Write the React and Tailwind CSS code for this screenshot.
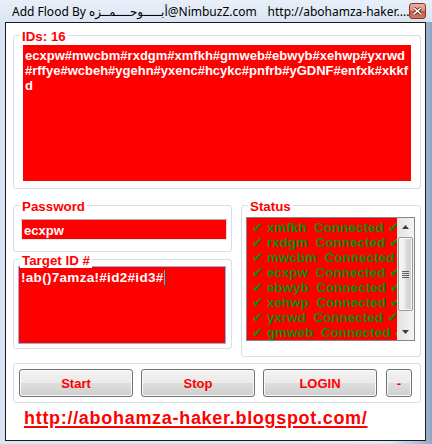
export default function App() {
  const rows = [
    "xmfkh",
    "rxdgm",
    "mwcbm",
    "ecxpw",
    "ebwyb",
    "xehwp",
    "yxrwd",
    "gmweb",
  ];
  const btn =
    "h-[28px] rounded-[3px] border border-[#707070] bg-[linear-gradient(#f2f2f2_0%,#ebebeb_50%,#dddddd_50%,#cfcfcf_100%)] shadow-[inset_0_0_0_1px_#fbfbfb] text-[#ff0000] font-bold text-[13px] pt-[2px] flex items-center justify-center";
  const label =
    "absolute top-[-7px] left-[6px] px-[2px] bg-white text-[#ff0000] font-bold text-[13.33px] leading-[15px] whitespace-nowrap";
  const group = "relative border border-[#d5dfe5] rounded-[3px]";
  return (
    <div className="w-[432px] h-[444px] overflow-hidden bg-[linear-gradient(90deg,#d9e5f3_0%,#dfe9f5_90%,#aebfd6_97%,#8fa6c4_100%)] flex flex-col font-['Liberation_Sans','DejaVu_Sans',sans-serif]">
      {/* title bar */}
      <div className="h-[22px] shrink-0 flex items-center pl-[12px] pt-[2px] text-[12px] leading-[18px] text-black font-['Noto_Sans','DejaVu_Sans',sans-serif] bg-[linear-gradient(#e8eff9,#dae5f2)]">
        <span className="w-[263px] whitespace-nowrap overflow-hidden">
          Add Flood By أبـــــوحــــمــزه@NimbuzZ.com
        </span>
        <span className="whitespace-nowrap">http://abohamza-haker....</span>
        <div className="ml-auto mr-[6px] mb-[2px] w-[17px] h-[16px] rounded-[3px] border border-[#7d3a2c] bg-[linear-gradient(#eab1a2_0%,#de8c76_50%,#c9583f_50%,#d4775e_100%)] flex items-center justify-center">
          <svg width="9" height="8" viewBox="0 0 9 8">
            <path
              d="M1 1 L8 7 M8 1 L1 7"
              stroke="#4a1a10"
              strokeWidth="3"
              strokeLinecap="square"
            />
            <path
              d="M1 1 L8 7 M8 1 L1 7"
              stroke="#ffffff"
              strokeWidth="1.6"
              strokeLinecap="square"
            />
          </svg>
        </div>
      </div>

      {/* client area */}
      <div className="ml-[5px] w-[421px] h-[419px] shrink-0 border border-[#1c1c1c] bg-white pl-[7px] pt-[12px]">
        {/* IDs */}
        <div className={`${group} w-[408px] h-[154px] pt-[9px] pl-[9px]`}>
          <span className={label}>IDs: 16</span>
          <div className="w-[388px] h-[136px] bg-[#ff0000] pl-[2px] pt-[3px] text-white font-bold text-[13px] leading-[15px] overflow-hidden whitespace-nowrap">
            <div>ecxpw#mwcbm#rxdgm#xmfkh#gmweb#ebwyb#xehwp#yxrwd</div>
            <div>#rffye#wcbeh#ygehn#yxenc#hcykc#pnfrb#yGDNF#enfxk#xkkf</div>
            <div>d</div>
          </div>
        </div>

        {/* middle row */}
        <div className="mt-[16px] flex items-start gap-[9px]">
          <div className="w-[219px] flex flex-col gap-[7px]">
            <div className={`${group} h-[47px] pl-[7px] pt-[13px]`}>
              <span className={label}>Password</span>
              <div className="w-[206px] h-[21px] border border-[#abadb3] border-l-[#e2e3ea] border-r-[#dbdfe6] border-b-[#e3e9ef]">
                <div className="h-full bg-[#ff0000] pl-[2px] text-white font-bold text-[13px] leading-[21px] overflow-hidden">
                  ecxpw
                </div>
              </div>
            </div>
            <div className={`${group} h-[90px] pl-[4px] pt-[6px]`}>
              <span className={label}>Target ID #</span>
              <div className="w-[208px] h-[78px] border border-[#8db2dc]">
                <div className="h-full bg-[#ff0000] pl-[2px] pt-[3px] text-white font-bold text-[13.5px] tracking-[0.3px] leading-[15px] whitespace-nowrap">
                  !ab()7amza!#id2#id3#
                  <span className="inline-block w-[1px] h-[15px] bg-[#00e5ff] align-[-3px]" />
                </div>
              </div>
            </div>
          </div>

          <div className={`${group} w-[180px] h-[152px] pl-[4px] pt-[11px]`}>
            <span className={label}>Status</span>
            <div className="w-[169px] h-[124px] border border-[#828790] flex">
              <div className="w-[150px] h-full bg-[#ff0000] pl-[5px] pt-[2px] overflow-hidden text-[#0a8a0a] font-bold text-[13.5px] leading-[15px]">
                {rows.map((r) => (
                  <div key={r} className="h-[15px] whitespace-pre">
                    {"✔ " + r + "  Connected ✔"}
                  </div>
                ))}
              </div>
              <div className="w-[17px] h-full bg-[linear-gradient(90deg,#e3e3e3,#f3f3f3)] flex flex-col items-center">
                <div className="h-[17px] w-full flex items-center justify-center">
                  <svg width="7" height="4" viewBox="0 0 7 4">
                    <path d="M0 4 L3.5 0 L7 4 Z" fill="#3c3c3c" />
                  </svg>
                </div>
                <div className="mt-[2px] w-[15px] h-[74px] rounded-[2px] border border-[#989898] bg-[linear-gradient(90deg,#f6f6f6_0%,#ececec_45%,#dadada_55%,#d0d0d0_100%)] shadow-[inset_0_0_0_1px_#fafafa] flex items-center justify-center">
                  <svg width="7" height="7" viewBox="0 0 7 7">
                    <path
                      d="M0 0.5 H7 M0 2.5 H7 M0 4.5 H7 M0 6.5 H7"
                      stroke="#5f5f5f"
                      strokeWidth="1"
                    />
                  </svg>
                </div>
                <div className="mt-auto h-[17px] w-full flex items-center justify-center">
                  <svg width="7" height="4" viewBox="0 0 7 4">
                    <path d="M0 0 L7 0 L3.5 4 Z" fill="#3c3c3c" />
                  </svg>
                </div>
              </div>
            </div>
          </div>
        </div>

        {/* buttons */}
        <div className={`${group} mt-[6px] w-[408px] h-[40px] pl-[5px] pt-[5px] flex`}>
          <button className={`${btn} w-[114px]`}>Start</button>
          <button className={`${btn} w-[114px] ml-[8px]`}>Stop</button>
          <button className={`${btn} w-[114px] ml-[8px]`}>LOGIN</button>
          <button className={`${btn} w-[26px] ml-[9px]`}>-</button>
        </div>

        {/* link */}
        <div className="mt-[5px] ml-[11px] text-[#ff0000] font-bold text-[18px] leading-[20px] tracking-[0.7px] underline decoration-[2px] underline-offset-[2px] whitespace-nowrap">
          http://abohamza-haker.blogspot.com/
        </div>
      </div>
    </div>
  );
}
